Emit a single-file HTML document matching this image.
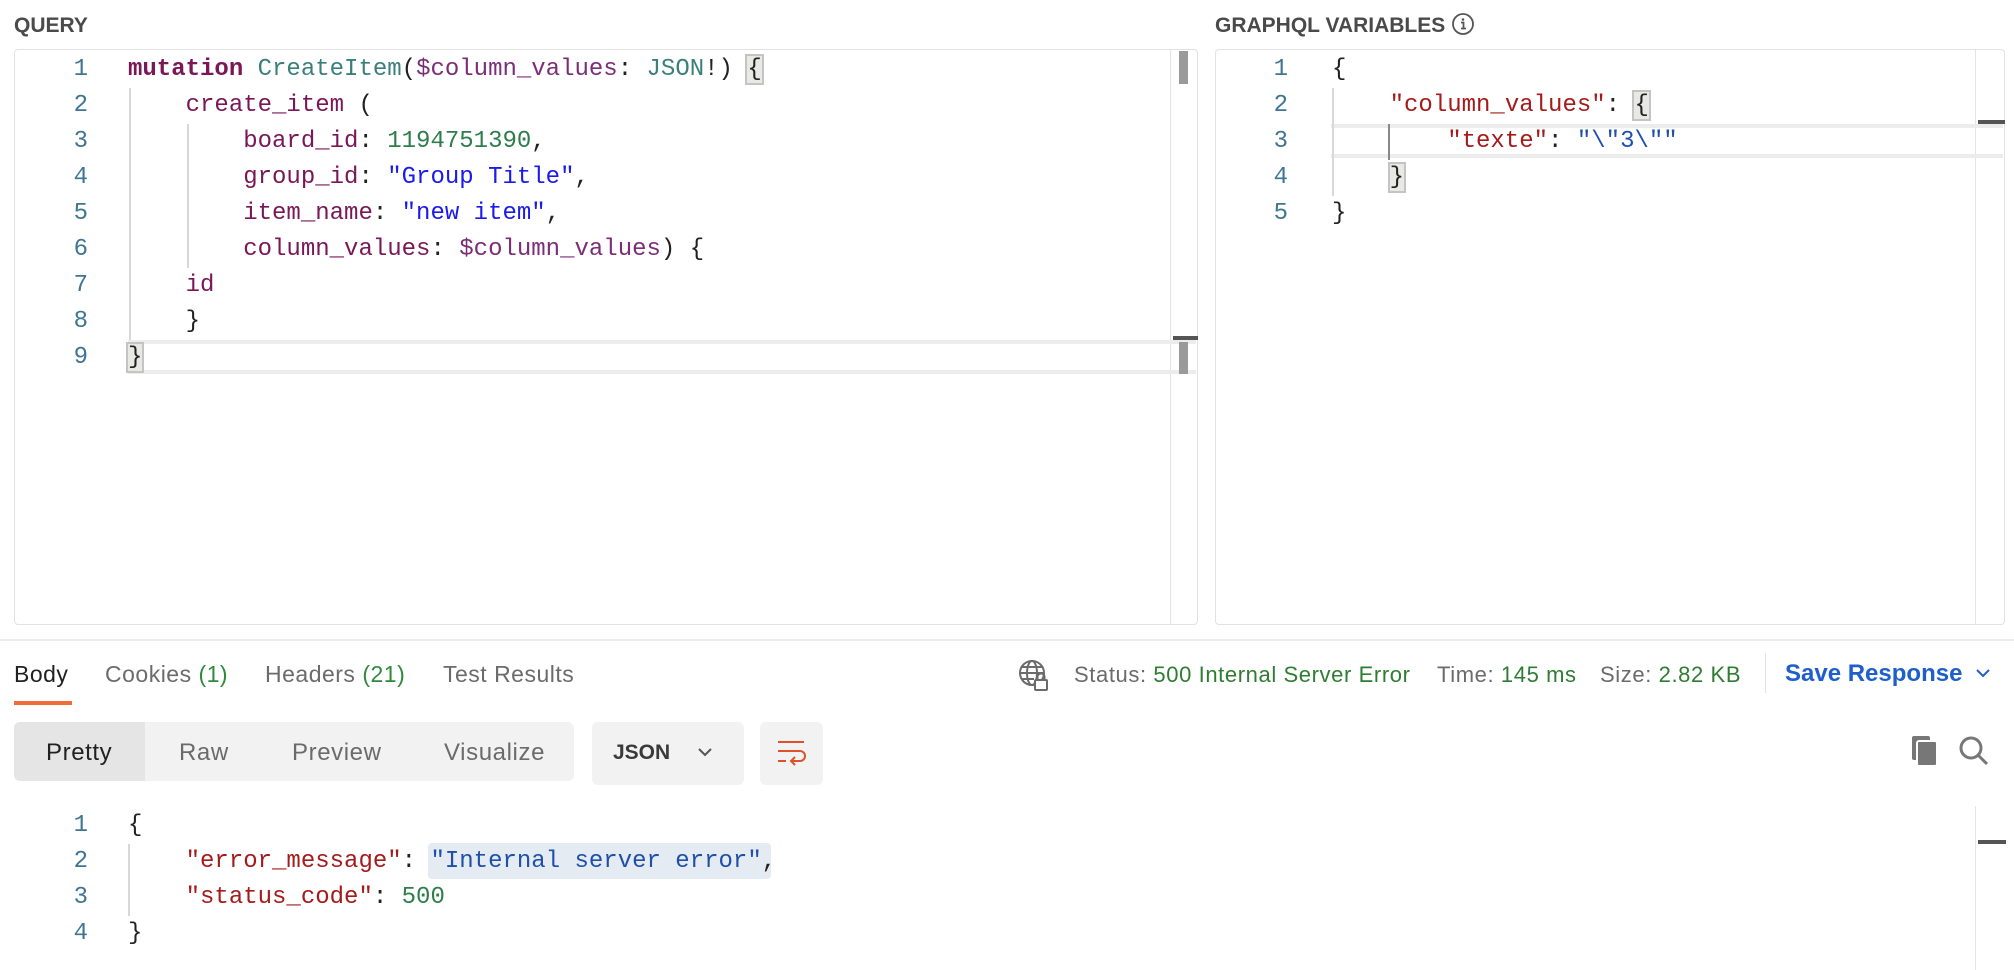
<!DOCTYPE html>
<html><head><meta charset="utf-8"><style>
*{margin:0;padding:0;box-sizing:border-box}
body{width:2014px;height:970px;background:#fff;position:relative;overflow:hidden;font-family:"Liberation Sans",sans-serif;color:#212121}
.a{position:absolute;white-space:pre}
.lbl{font-size:21px;font-weight:bold;color:#4a4a4a;top:14px}
.pane{position:absolute;top:49px;height:576px;border:1px solid #e2e2e2;border-radius:4px}
.m{font-family:"Liberation Mono",monospace;font-size:24px;line-height:36px;height:36px}
.ln{color:#3f7594;width:40px;text-align:right}
.kw{color:#7a1757;font-weight:bold}.ty{color:#3a7f7c}.vr{color:#7c2d78}.fd{color:#7a1757}.nm{color:#2e7d4a}.st{color:#1a1aeb}
.jk{color:#a31b1b}.js{color:#1f4fa8}.jn{color:#2e7d4a}
.guide{position:absolute;width:2px;background:#d8d8d8}
.t{font-size:23px;letter-spacing:0.5px;top:661px;color:#6b6b6b}
.g{color:#2e8b3d}
.s{font-size:22px;letter-spacing:0.6px;top:662px;color:#6b6b6b}
.sg{color:#2e7d32}
.mb{background:#e8e8e4;outline:2px solid #c4c4c4}
</style></head><body>
<div class="a lbl" style="left:14px">QUERY</div>
<div class="a lbl" style="left:1215px">GRAPHQL VARIABLES</div>
<svg class="a" style="left:1451px;top:12px" width="24" height="24" viewBox="0 0 24 24"><circle cx="12" cy="12" r="10" fill="none" stroke="#555" stroke-width="1.8"/><circle cx="12" cy="7.5" r="1.3" fill="#555"/><path d="M10 10.5h2.5v6M10 16.5h5" stroke="#555" stroke-width="1.8" fill="none"/></svg>

<div class="pane" style="left:14px;width:1184px"></div>
<div class="a" style="left:1170px;top:50px;width:1px;height:574px;background:#e4e4e4"></div>
<div class="a" style="left:1179px;top:51px;width:9px;height:33px;background:#9a9a9a"></div>
<div class="a" style="left:128px;top:340px;width:1068px;height:34px;border-top:4px solid #ececec;border-bottom:4px solid #ececec"></div>
<div class="a" style="left:1173px;top:336px;width:25px;height:4px;background:#555"></div>
<div class="a" style="left:1179px;top:342px;width:9px;height:32px;background:#9a9a9a"></div>
<div class="guide" style="left:129px;top:88px;height:252px"></div>
<div class="guide" style="left:187px;top:124px;height:144px"></div>

<div style="position:absolute;left:0;top:3px;width:2014px;height:400px">
<div class="a m ln" style="left:48px;top:49px">1</div>
<div class="a m ln" style="left:48px;top:85px">2</div>
<div class="a m ln" style="left:48px;top:121px">3</div>
<div class="a m ln" style="left:48px;top:157px">4</div>
<div class="a m ln" style="left:48px;top:193px">5</div>
<div class="a m ln" style="left:48px;top:229px">6</div>
<div class="a m ln" style="left:48px;top:265px">7</div>
<div class="a m ln" style="left:48px;top:301px">8</div>
<div class="a m ln" style="left:48px;top:337px">9</div>
<div class="a m" style="left:128px;top:49px"><span class="kw">mutation</span> <span class="ty">CreateItem</span>(<span class="vr">$column_values</span>: <span class="ty">JSON</span>!) <span class="mb">{</span></div>
<div class="a m" style="left:128px;top:85px">    <span class="fd">create_item</span> (</div>
<div class="a m" style="left:128px;top:121px">        <span class="fd">board_id</span>: <span class="nm">1194751390</span>,</div>
<div class="a m" style="left:128px;top:157px">        <span class="fd">group_id</span>: <span class="st">"Group Title"</span>,</div>
<div class="a m" style="left:128px;top:193px">        <span class="fd">item_name</span>: <span class="st">"new item"</span>,</div>
<div class="a m" style="left:128px;top:229px">        <span class="fd">column_values</span>: <span class="vr">$column_values</span>) {</div>
<div class="a m" style="left:128px;top:265px">    <span class="fd">id</span></div>
<div class="a m" style="left:128px;top:301px">    }</div>
<div class="a m" style="left:128px;top:337px"><span class="mb">}</span></div>
</div>

<div class="pane" style="left:1215px;width:790px"></div>
<div class="a" style="left:1975px;top:50px;width:1px;height:574px;background:#e4e4e4"></div>
<div class="a" style="left:1331px;top:124px;width:672px;height:34px;border-top:4px solid #ececec;border-bottom:4px solid #ececec"></div>
<div class="a" style="left:1978px;top:120px;width:27px;height:4px;background:#555"></div>
<div class="guide" style="left:1332px;top:88px;height:108px"></div>
<div class="guide" style="left:1388px;top:124px;height:36px;background:#888"></div>
<div style="position:absolute;left:0;top:3px;width:2014px;height:400px">
<div class="a m ln" style="left:1248px;top:49px">1</div>
<div class="a m ln" style="left:1248px;top:85px">2</div>
<div class="a m ln" style="left:1248px;top:121px">3</div>
<div class="a m ln" style="left:1248px;top:157px">4</div>
<div class="a m ln" style="left:1248px;top:193px">5</div>
<div class="a m" style="left:1332px;top:49px">{</div>
<div class="a m" style="left:1332px;top:85px">    <span class="jk">"column_values"</span>: <span class="mb">{</span></div>
<div class="a m" style="left:1332px;top:121px">        <span class="jk">"texte"</span>: <span class="js">"\"3\""</span></div>
<div class="a m" style="left:1332px;top:157px">    <span class="mb">}</span></div>
<div class="a m" style="left:1332px;top:193px">}</div>
</div>

<div class="a" style="left:0;top:639px;width:2014px;height:2px;background:#ededed"></div>
<div class="a t" style="left:14px;color:#212121">Body</div>
<div class="a" style="left:14px;top:701px;width:58px;height:4px;background:#f26b3a"></div>
<div class="a t" style="left:105px">Cookies <span class="g">(1)</span></div>
<div class="a t" style="left:265px">Headers <span class="g">(21)</span></div>
<div class="a t" style="left:443px">Test Results</div>

<svg class="a" style="left:1017px;top:658px" width="36" height="36" viewBox="0 0 36 36" fill="none" stroke="#6b6b6b" stroke-width="2"><circle cx="15" cy="15" r="12"/><ellipse cx="15" cy="15" rx="5" ry="12"/><path d="M3 15h24M5 9h20M5 21h12"/><rect x="18" y="22" width="12" height="10" rx="1" fill="#fff"/><path d="M20.5 22v-3a3.5 3.5 0 0 1 7 0v3"/></svg>
<div class="a s" style="left:1074px">Status: <span class="sg">500 Internal Server Error</span></div>
<div class="a s" style="left:1437px">Time: <span class="sg">145 ms</span></div>
<div class="a s" style="left:1600px">Size: <span class="sg">2.82 KB</span></div>
<div class="a" style="left:1765px;top:653px;width:1px;height:40px;background:#e2e2e2"></div>
<div class="a" style="left:1785px;top:660px;font-size:24px;font-weight:bold;color:#1f5fcc">Save Response</div>
<svg class="a" style="left:1974px;top:666px" width="18" height="14" viewBox="0 0 18 14"><path d="M3 4l6 6 6-6" stroke="#1f5fcc" stroke-width="2" fill="none"/></svg>

<div class="a" style="left:14px;top:722px;width:560px;height:59px;background:#f2f2f2;border-radius:6px"></div>
<div class="a" style="left:14px;top:722px;width:131px;height:59px;background:#e5e5e5;border-radius:6px 0 0 6px"></div>
<div class="a" style="left:46px;top:739px;font-size:24px;letter-spacing:0.6px;color:#212121">Pretty</div>
<div class="a" style="left:179px;top:739px;font-size:24px;letter-spacing:0.6px;color:#6b6b6b">Raw</div>
<div class="a" style="left:292px;top:739px;font-size:24px;letter-spacing:0.6px;color:#6b6b6b">Preview</div>
<div class="a" style="left:444px;top:739px;font-size:24px;letter-spacing:0.6px;color:#6b6b6b">Visualize</div>
<div class="a" style="left:592px;top:722px;width:152px;height:63px;background:#f2f2f2;border-radius:6px"></div>
<div class="a" style="left:613px;top:741px;font-size:21px;font-weight:bold;color:#3a3a3a">JSON</div>
<svg class="a" style="left:696px;top:745px" width="18" height="14" viewBox="0 0 18 14"><path d="M3 4l6 6 6-6" stroke="#555" stroke-width="2" fill="none"/></svg>
<div class="a" style="left:760px;top:722px;width:63px;height:63px;background:#f2f2f2;border-radius:6px"></div>
<svg class="a" style="left:776px;top:740px" width="32" height="30" viewBox="0 0 32 30" fill="none" stroke="#e0502a" stroke-width="2"><path d="M2 2h26M2 11h22a5 5 0 0 1 0 10h-8M19 17l-4 4 4 4M2 21h8"/></svg>
<svg class="a" style="left:1910px;top:734px" width="32" height="34" viewBox="0 0 32 34"><rect x="2" y="2" width="18" height="24" rx="2" fill="#777"/><rect x="7" y="7" width="20" height="25" rx="2" fill="#777" stroke="#fff" stroke-width="2"/></svg>
<svg class="a" style="left:1957px;top:734px" width="34" height="34" viewBox="0 0 34 34" fill="none" stroke="#777" stroke-width="3"><circle cx="14" cy="14" r="10"/><path d="M21 21l9 9"/></svg>

<div class="a" style="left:1975px;top:806px;width:1px;height:164px;background:#e4e4e4"></div>
<div class="a" style="left:1978px;top:840px;width:28px;height:4px;background:#555"></div>
<div class="guide" style="left:128px;top:844px;height:72px"></div>
<div class="a" style="left:428px;top:843px;width:343px;height:36px;background:#e4ebf2;border-radius:4px"></div>
<div style="position:absolute;left:0;top:3px;width:2014px;height:967px">
<div class="a m ln" style="left:48px;top:805px">1</div>
<div class="a m ln" style="left:48px;top:841px">2</div>
<div class="a m ln" style="left:48px;top:877px">3</div>
<div class="a m ln" style="left:48px;top:913px">4</div>
<div class="a m" style="left:128px;top:805px">{</div>
<div class="a m" style="left:128px;top:841px">    <span class="jk">"error_message"</span>: <span class="js">"Internal server error"</span>,</div>
<div class="a m" style="left:128px;top:877px">    <span class="jk">"status_code"</span>: <span class="jn">500</span></div>
<div class="a m" style="left:128px;top:913px">}</div>
</div>
</body></html>
